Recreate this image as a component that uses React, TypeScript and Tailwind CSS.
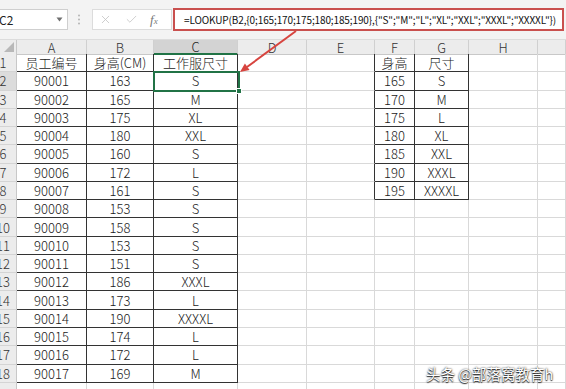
import { X, Check } from "lucide-react";

const main = [
  ["员工编号", "身高(CM)", "工作服尺寸"],
  ["90001", "163", "S"],
  ["90002", "165", "M"],
  ["90003", "175", "XL"],
  ["90004", "180", "XXL"],
  ["90005", "160", "S"],
  ["90006", "172", "L"],
  ["90007", "161", "S"],
  ["90008", "153", "S"],
  ["90009", "158", "S"],
  ["90010", "153", "S"],
  ["90011", "151", "S"],
  ["90012", "186", "XXXL"],
  ["90013", "173", "L"],
  ["90014", "190", "XXXXL"],
  ["90015", "174", "L"],
  ["90016", "172", "L"],
  ["90017", "169", "M"],
];

const lookup = [
  ["身高", "尺寸"],
  ["165", "S"],
  ["170", "M"],
  ["175", "L"],
  ["180", "XL"],
  ["185", "XXL"],
  ["190", "XXXL"],
  ["195", "XXXXL"],
];

const grid = "grid grid-cols-[17px_70px_67px_84px_69px_68px_40px_54px_69px_28px]";
const dark = "border-r border-b border-r-[#333] border-b-[#333]";
const light = "border-r border-b border-r-[#d9d9d9] border-b-[#d9d9d9]";
const font = "font-['Noto_Sans_CJK_SC',sans-serif]";

function Cell({ text, cls }: { text?: string; cls: string }) {
  return (
    <div className={`flex items-center justify-center overflow-hidden whitespace-nowrap text-[13px] leading-none font-light text-[#1a1a1a] ${cls}`}>
      {text}
    </div>
  );
}

function RowHead({ n, active }: { n: number | string; active?: boolean }) {
  return (
    <div className={`relative overflow-hidden border-r border-b border-r-[#c8c8c8] border-b-[#d4d4d4] ${active ? "bg-[#dcdcdc]" : "bg-[#ececec]"}`}>
      <div className="absolute left-[-12px] top-0 bottom-0 w-[30px] flex items-center justify-center text-[13px] leading-none font-light text-[#333]">
        {n}
      </div>
    </div>
  );
}

export default function App() {
  const letters = ["A", "B", "C", "D", "E", "F", "G", "H", ""];

  return (
    <div className={`relative w-[566px] h-[389px] overflow-hidden bg-white ${font}`}>
      {/* Formula bar */}
      <div className="h-[40px] bg-[#f3f3f3] border-b border-[#dcdcdc] flex items-start">
        <div className="mt-[9px] w-[68px] h-[21px] bg-white border border-l-0 border-[#cfcfcf] flex items-center justify-between pr-[4px]">
          <span className="text-[12px] text-[#222] leading-none ml-[-1px]">C2</span>
          <svg width="7" height="5" viewBox="0 0 7 5"><path d="M0.5 0.5 L6.5 0.5 L3.5 4.5 Z" fill="#707070" /></svg>
        </div>
        <svg className="mt-[14px] ml-[9px]" width="4" height="11" viewBox="0 0 4 11">
          <circle cx="2" cy="1.5" r="1" fill="#b5b5b5" />
          <circle cx="2" cy="5.5" r="1" fill="#b5b5b5" />
          <circle cx="2" cy="9.5" r="1" fill="#b5b5b5" />
        </svg>
        <div className="mt-[9px] ml-[11px] w-[80px] h-[21px] bg-white border border-[#dcdcdc] flex items-center">
          <X className="ml-[6px] w-[13px] h-[13px] text-[#c4c4c4]" strokeWidth={1.5} />
          <Check className="ml-[13px] w-[13px] h-[13px] text-[#c4c4c4]" strokeWidth={1.5} />
          <span className="ml-[12px] font-['Liberation_Serif',serif] italic text-[13px] text-[#777] leading-none">
            f<span className="text-[9px]">x</span>
          </span>
        </div>
        <div className="mt-[8px] ml-[1px] w-[391px] h-[23px] overflow-hidden bg-white border-2 border-[#c9504e] flex items-center pl-[9px]">
          <span className="text-[10px] leading-none text-[#111] whitespace-nowrap tracking-[-0.12px]">
            =LOOKUP(B2,{"{"}0;165;170;175;180;185;190{"}"},{"{"}"S";"M";"L";"XL";"XXL";"XXXL";"XXXXL"{"}"})
          </span>
        </div>
      </div>

      {/* Column headers */}
      <div className={`${grid} h-[14px]`}>
        <div className="relative bg-[#ececec] border-r border-b border-[#c8c8c8]">
          <svg className="absolute right-[2px] bottom-[2px]" width="10" height="10" viewBox="0 0 10 10">
            <path d="M10 0 L10 10 L0 10 Z" fill="#b8b8b8" />
          </svg>
        </div>
        {letters.map((l, i) => (
          <div
            key={i}
            className={`flex items-center justify-center text-[13px] leading-none font-light border-r border-r-[#d0d0d0] ${
              l === "C"
                ? "bg-[#d3d3d3] text-[#222] border-b-2 border-b-[#217346]"
                : "bg-[#ececec] text-[#333] border-b border-b-[#c8c8c8]"
            }`}
          >
            {l}
          </div>
        ))}
      </div>

      {/* Rows */}
      {main.map((r, i) => {
        const lk = i < 8 ? lookup[i] : ["", ""];
        const inLk = i < 8;
        return (
          <div key={i} className={`${grid} h-[18.28px]`}>
            <RowHead n={i + 1} active={i === 1} />
            <Cell text={r[0]} cls={dark} />
            <Cell text={r[1]} cls={dark} />
            <Cell text={r[2]} cls={dark} />
            <Cell cls={light} />
            <Cell cls={inLk ? "border-r border-b border-r-[#333] border-b-[#d9d9d9]" : light} />
            <Cell text={lk[0]} cls={inLk ? dark : light} />
            <Cell text={lk[1]} cls={inLk ? dark : light} />
            <Cell cls={light} />
            <Cell cls={light} />
          </div>
        );
      })}
      <div className={`${grid} h-[10px]`}>
        <RowHead n="" />
        {letters.map((_, i) => (
          <Cell key={i} cls={light} />
        ))}
      </div>

      {/* Selection on C2 */}
      <div className="absolute left-[153px] top-[71px] w-[87px] h-[21px] border-2 border-[#217346] pointer-events-none" />
      <div className="absolute left-[236px] top-[88px] w-[6px] h-[6px] bg-[#217346] border border-white pointer-events-none" />

      {/* Arrow */}
      <svg className="absolute left-0 top-0 pointer-events-none" width="566" height="389" viewBox="0 0 566 389">
        <line x1="296" y1="31" x2="247" y2="67" stroke="#d7443f" strokeWidth="2" />
        <polygon points="240,72 249.6,69.9 244.9,63.5" fill="#d7443f" />
      </svg>

      {/* Watermark */}
      <div className="absolute left-[426px] top-[363px] text-[14.5px] text-white whitespace-nowrap [text-shadow:0_0_2px_rgba(0,0,0,0.9),0_1px_1px_rgba(0,0,0,0.8)]">
        头条 @部落窝教育h
      </div>
    </div>
  );
}
